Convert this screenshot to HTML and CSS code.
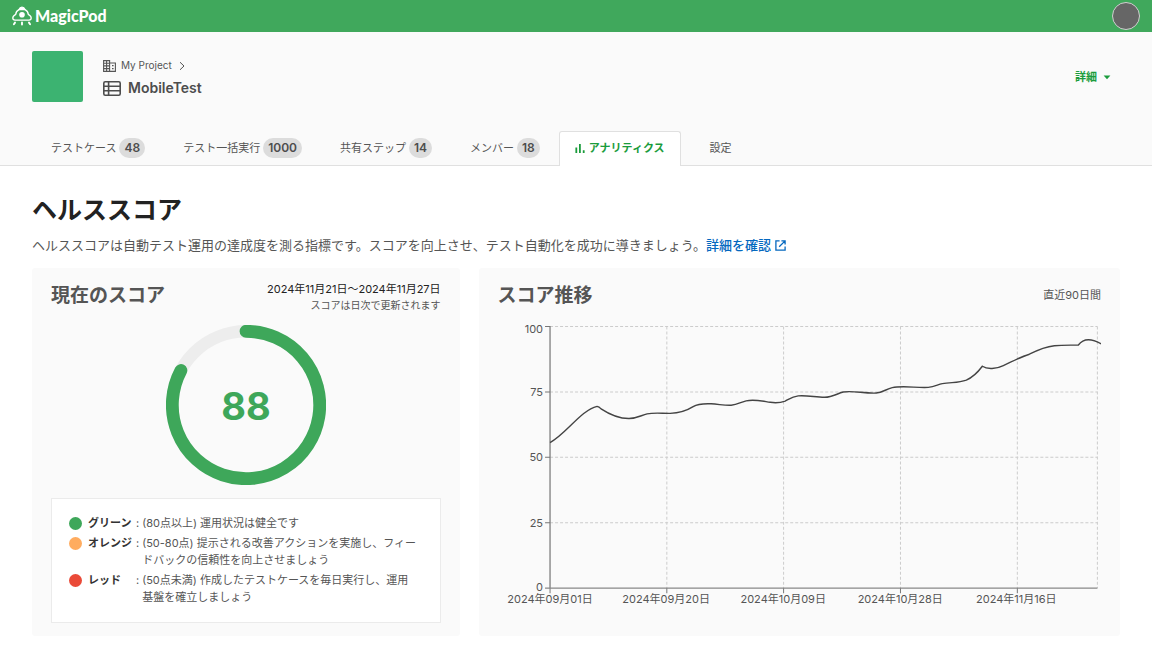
FILE: index.html
```html
<!DOCTYPE html>
<html lang="ja">
<head>
<meta charset="utf-8">
<meta name="viewport" content="width=device-width, initial-scale=1">
<title>MagicPod - MobileTest</title>
<link rel="stylesheet" href="styles.css">
</head>
<body>
<header class="topbar">
  <a class="brand" href="#">
    <svg class="brand-icon" viewBox="0 0 20 20" width="20" height="20" fill="none" stroke="#fff" stroke-width="1.3" stroke-linecap="round" stroke-linejoin="round" aria-hidden="true">
      <path d="M7 3.6C7.6 2 8.7 1.2 10 1.2S12.4 2 13 3.6Z" fill="#fff"/>
      <path d="M7 3.6C5 4.5 3.9 6.2 3.7 8.4C1.9 9.3.8 10.7.8 12.1C.8 13.5 1.6 14.2 3 14.2H17C18.4 14.2 19.2 13.5 19.2 12.1C19.2 10.7 18.1 9.3 16.3 8.4C16.1 6.2 15 4.5 13 3.6"/>
      <circle cx="10" cy="8.8" r="2.8" fill="#fff" stroke="none"/>
      <path d="M3 16.6L1.9 18.2M10 16.4V18.6M17 16.6L18.1 18.2" stroke-width="1.9"/>
    </svg>
    <span>MagicPod</span>
  </a>
  <button class="avatar" type="button" aria-label="アカウント"></button>
</header>

<section class="project">
  <div class="project-head">
    <div class="project-icon"></div>
    <div class="project-names">
      <a class="crumb" href="#">
        <svg viewBox="0 0 13 12" width="13" height="12" fill="none" stroke="#555" aria-hidden="true">
          <path d="M.6 .6H6.6V11.4H.6ZM6.6 3H12.4V11.4H6.6M3.6 .6V11.4M.6 3.2H6.6M.6 5.9H6.6M.6 8.6H6.6" stroke-width="1.1"/>
          <path d="M9 5.6H10.6M9 8.6H10.6" stroke-width="1.2"/>
        </svg>
        <span>My Project</span>
        <svg class="crumb-arrow" viewBox="0 0 6 10" width="6" height="10" fill="none" stroke="#555" aria-hidden="true"><path d="M1 1.2L5 5L1 8.8"/></svg>
      </a>
      <h2 class="project-title">
        <svg viewBox="0 0 18 15" width="18" height="15" fill="none" stroke="#4d4d4d" stroke-width="1.6" aria-hidden="true">
          <rect x=".8" y=".8" width="16.4" height="13.4" rx="1.4"/>
          <path d="M.8 5.2H17.2M.8 9.8H17.2M5.6 .8V14.2"/>
        </svg>
        <span>MobileTest</span>
      </h2>
    </div>
    <button class="detail-button" type="button">詳細
      <svg viewBox="0 0 8 5" width="8" height="5" aria-hidden="true"><path d="M.6 .4H7.4L4 4.2Z" fill="#1b9c3c"/></svg>
    </button>
  </div>
  <nav class="tabs">
    <a class="tab" href="#">テストケース<span class="badge">48</span></a>
    <a class="tab" href="#">テスト一括実行<span class="badge">1000</span></a>
    <a class="tab" href="#">共有ステップ<span class="badge">14</span></a>
    <a class="tab" href="#">メンバー<span class="badge">18</span></a>
    <a class="tab tab-active" href="#" aria-current="page">
      <svg viewBox="0 0 10 9" width="10" height="9" fill="#1b9c3c" aria-hidden="true"><path d="M.4 3.4H2.2V9H.4ZM4 0H5.8V9H4ZM7.8 6.2H9.6V9H7.8Z"/></svg>
      アナリティクス
    </a>
    <a class="tab" href="#">設定</a>
  </nav>
</section>

<main class="content">
  <h1 class="page-title">ヘルススコア</h1>
  <p class="lead">ヘルススコアは自動テスト運用の達成度を測る指標です。スコアを向上させ、テスト自動化を成功に導きましょう。<a class="lead-link" href="#">詳細を確認<svg viewBox="0 0 11 11" width="11" height="11" fill="none" stroke="#0468bf" stroke-width="1.3" aria-hidden="true"><path d="M4.6 .9H.9V10.1H10.1V6.4M6.4 .9H10.1V4.6M10.1 .9L4.2 6.8"/></svg></a></p>

  <div class="cards">
    <section class="card">
      <div class="card-head">
        <h2 class="card-title">現在のスコア</h2>
        <div class="period">
          <p class="period-range">2024年11月21日〜2024年11月27日</p>
          <p class="period-note">スコアは日次で更新されます</p>
        </div>
      </div>
      <svg class="ring" viewBox="0 0 160 160" width="160" height="160" role="img" aria-label="スコア 88">
        <circle cx="80" cy="80" r="73.7" fill="none" stroke="#ededed" stroke-width="12.4"/>
        <path d="M80 6.3A73.7 73.7 0 1 1 14.9 45.5" fill="none" stroke="#3ea75a" stroke-width="12.8" stroke-linecap="round"/>
        <text class="ring-value" x="80" y="95" text-anchor="middle">88</text>
      </svg>
      <dl class="legend">
        <dt><span class="dot dot-green"></span>グリーン</dt>
        <dd><span>:</span><span>(80点以上) 運用状況は健全です</span></dd>
        <dt><span class="dot dot-orange"></span>オレンジ</dt>
        <dd><span>:</span><span>(50-80点) 提示される改善アクションを実施し、フィードバックの信頼性を向上させましょう</span></dd>
        <dt><span class="dot dot-red"></span>レッド</dt>
        <dd><span>:</span><span>(50点未満) 作成したテストケースを毎日実行し、運用基盤を確立しましょう</span></dd>
      </dl>
    </section>

    <section class="card">
      <div class="card-head">
        <h2 class="card-title">スコア推移</h2>
        <p class="span-note">直近90日間</p>
      </div>
      <svg class="chart" viewBox="498 316 603 300" role="img" aria-label="スコア推移">
        <g class="grid-lines">
          <path d="M550 326.5H1097M550 392H1097M550 457.2H1097M550 522.5H1097"/>
          <path d="M666.7 326.5V588M783.4 326.5V588M900.2 326.5V588M1017 326.5V588M1097 326.5V588"/>
        </g>
        <path class="axis" d="M550 326V588M545 588H1097"/>
        <path class="tick" d="M545 326.5H550M545 392H550M545 457.2H550M545 522.5H550M550 588V593M666.7 588V593M783.4 588V593M900.2 588V593M1017 588V593"/>
        <path class="line" d="M550 442.5C566 434 581 410 597 406.3Q599 406.6 601 408.8C612 416 622 418.6 629 418.5C637 418.3 641 415.3 647 413.8C654 412.4 662 413.4 670 413.3C680 413 686 411 693 406.6C698 403.4 704 403.4 711 403.7C719 404.2 725 405.6 731 405.2C737 404.8 741 402 746 400.8C754 399 762 401 770 402.2C776 403.2 780 402.8 785 401C789 399 792 396.6 798 395.8C806 395 815 397 824 397.2C832 397.4 837 393.4 843 392C852 390.2 864 393.6 876 393C882 392.6 886 389 892 387.6C902 385.4 917 388 928 387.3C934 386.8 937 384.8 942 383.6C951 382 958 383 966 380C973 377 978 371.6 982 366.2C987 369.6 996 369 1003 365.5C1012 361.4 1020 357 1029 354.2C1038 349.6 1046 346.5 1054 345.7C1062 344.9 1070 345.2 1078 345C1083 338.2 1090 337.6 1101 344"/>
        <g class="label" text-anchor="end">
          <text x="543" y="333">100</text>
          <text x="543" y="396">75</text>
          <text x="543" y="461">50</text>
          <text x="543" y="527">25</text>
          <text x="543" y="591">0</text>
        </g>
        <g class="label" text-anchor="middle">
          <text x="550" y="603">2024年09月01日</text>
          <text x="666" y="603">2024年09月20日</text>
          <text x="783" y="603">2024年10月09日</text>
          <text x="900" y="603">2024年10月28日</text>
          <text x="1016" y="603">2024年11月16日</text>
        </g>
      </svg>
    </section>
  </div>
</main>
</body>
</html>
```
FILE: styles.css
```css
* {
  box-sizing: border-box;
}

body {
  margin: 0;
  background: #fff;
  color: #555;
  font: 11px/17px Inter, "Noto Sans CJK JP", sans-serif;
}

h1, h2, p, dl, dd {
  margin: 0;
}

a {
  color: inherit;
  text-decoration: none;
}

button {
  font: inherit;
  cursor: pointer;
}

svg {
  flex: none;
}

.topbar {
  display: flex;
  align-items: center;
  justify-content: space-between;
  height: 32px;
  padding: 0 12px;
  background: #40a85c;
}

.brand {
  display: flex;
  align-items: center;
  gap: 3px;
  color: #fff;
  font: 900 16px/20px Lato, sans-serif;
}

.avatar {
  width: 28px;
  height: 28px;
  padding: 0;
  border: 1px solid #d0d0d0;
  border-radius: 50%;
  background: #666;
}

.project {
  background: #fafafa;
}

.project-head {
  display: flex;
  align-items: center;
  padding: 19px 41px 29px 32px;
}

.project-icon {
  width: 51px;
  height: 51px;
  border-radius: 2px;
  background: #3cb371;
}

.project-names {
  display: flex;
  flex-direction: column;
  gap: 3px;
  margin-left: 20px;
  padding-top: 3px;
}

.crumb {
  display: flex;
  align-items: center;
  gap: 5px;
  font-size: 10px;
}

.crumb-arrow {
  margin-left: 2px;
}

.project-title {
  display: flex;
  align-items: center;
  gap: 7px;
  color: #4d4d4d;
  font-size: 14px;
  font-weight: 600;
  line-height: 22px;
}

.detail-button {
  display: flex;
  align-items: center;
  gap: 6px;
  margin-left: auto;
  padding: 2px 0 0;
  border: 0;
  background: none;
  color: #1b9c3c;
  font-weight: 700;
}

.tabs {
  display: flex;
  height: 35px;
  padding-left: 32px;
  border-bottom: 1px solid #e0e0e0;
}

.tab {
  display: flex;
  align-items: center;
  gap: 3px;
  padding: 0 19px;
}

.tab-active {
  gap: 4px;
  margin: 0 10px -1px 0;
  padding: 0 15px 1px;
  border: 1px solid #e0e0e0;
  border-bottom: 0;
  border-radius: 3px 3px 0 0;
  background: #fff;
  color: #1b9c3c;
  font-weight: 700;
}

.badge {
  padding: 0 5px;
  border-radius: 10px;
  background: #dcdcdc;
  color: #4d4d4d;
  font-size: 12px;
  font-weight: 600;
  line-height: 20px;
}

.content {
  padding: 25px 32px 12px;
}

.page-title {
  color: #222;
  font-size: 25px;
  font-weight: 700;
  line-height: 38px;
}

.lead {
  margin: 7px 0 13px;
  font-size: 13px;
  line-height: 19px;
}

.lead-link {
  color: #0468bf;
  font-weight: 500;
}

.lead-link svg {
  margin-left: 4px;
  vertical-align: -1px;
}

.cards {
  display: grid;
  grid-template-columns: 2fr 3fr;
  gap: 19px;
}

.card {
  display: flex;
  flex-direction: column;
  padding: 13px 19px;
  border-radius: 3px;
  background: #fafafa;
}

.card-head {
  display: flex;
  justify-content: space-between;
}

.card-title {
  font-size: 19px;
  font-weight: 700;
  line-height: 30px;
}

.period {
  text-align: right;
}

.period-range {
  color: #222;
}

.period-note {
  font-size: 10px;
  line-height: 14px;
}

.span-note {
  line-height: 28px;
}

.ring {
  align-self: center;
  margin: 13px 0;
}

.ring-value {
  fill: #3ea75a;
  font-size: 38px;
  font-weight: 700;
}

.legend {
  display: grid;
  grid-template-columns: auto 1fr;
  gap: 3px 4px;
  padding: 16px 22px 16px 17px;
  border: 1px solid #ebebeb;
  background: #fff;
}

.legend dt {
  display: flex;
  align-items: center;
  align-self: start;
  gap: 6px;
  color: #333;
  font-weight: 700;
}

.legend dd {
  display: flex;
  gap: 3px;
}

.dot {
  width: 13px;
  height: 13px;
  border-radius: 50%;
}

.dot-green {
  background: #3ea75a;
}

.dot-orange {
  background: #ffac5f;
}

.dot-red {
  background: #ea4a38;
}

.chart {
  display: block;
  width: 100%;
  height: auto;
  margin-top: 5px;
}

.grid-lines {
  fill: none;
  stroke: #ccc;
  stroke-dasharray: 3 2;
}

.axis {
  fill: none;
  stroke: #888;
  stroke-width: 1.4;
}

.tick {
  fill: none;
  stroke: #777;
}

.line {
  fill: none;
  stroke: #444;
  stroke-width: 1.4;
}

.label {
  fill: #555;
  font-size: 11px;
}
```
